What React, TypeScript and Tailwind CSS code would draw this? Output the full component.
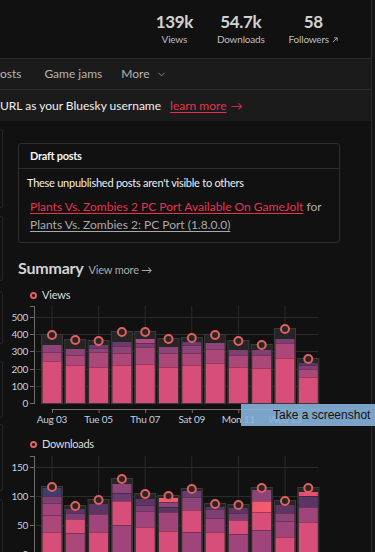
import { ChevronDown } from "lucide-react"

type Seg = [number, string]
type Bar = { top: number; segs: Seg[] }

const PINK = "#d84e7a"
const MAUVE = "#ab4779"
const MAUVE2 = "#a0457c"
const PURPLE = "#8d4579"
const PURPLE2 = "#7d4075"
const DARK = "#6b3a6e"
const DARK2 = "#5c3565"
const NAVY = "#433b69"
const RED = "#f25a6e"

const viewBars: Bar[] = [
  { top: 334, segs: [[345, PURPLE], [352, MAUVE], [361, PINK]] },
  { top: 339, segs: [[349, PURPLE], [355, MAUVE], [365, PINK]] },
  { top: 340, segs: [[345, DARK], [348, PURPLE], [352, MAUVE], [367, PINK]] },
  { top: 331, segs: [[342, DARK], [346, PURPLE], [353, MAUVE], [365, PINK]] },
  { top: 331, segs: [[339, "#b24a80"], [343, PURPLE2], [347, MAUVE], [364, PINK]] },
  { top: 338, segs: [[347, PURPLE], [353, MAUVE], [367, PINK]] },
  { top: 337, segs: [[342, DARK], [345, PURPLE], [353, MAUVE], [365, PINK]] },
  { top: 334, segs: [[343, PURPLE], [349, MAUVE], [363, PINK]] },
  { top: 340, segs: [[350, PURPLE2], [355, MAUVE], [367, PINK]] },
  { top: 344, segs: [[350, PURPLE2], [355, MAUVE], [368, PINK]] },
  { top: 328, segs: [[339, PURPLE2], [343, MAUVE], [358, PINK]] },
  { top: 358, segs: [[363, DARK2], [365, PURPLE2], [369, MAUVE], [377, PINK]] },
]

const dlBars: Bar[] = [
  { top: 486, segs: [[488, NAVY], [496, PURPLE2], [503, MAUVE2], [515, MAUVE], [532, PINK]] },
  { top: 505, segs: [[509, DARK2], [513, PURPLE2], [519, PINK], [533, MAUVE]] },
  { top: 499, segs: [[504, DARK2], [514, MAUVE2], [532, PINK]] },
  { top: 478, segs: [[484, PURPLE], [493, DARK], [501, PINK], [525, MAUVE2]] },
  { top: 493, segs: [[499, DARK2], [505, PURPLE2], [511, MAUVE2], [527, PINK]] },
  { top: 495, segs: [[498, RED], [502, PURPLE], [507, DARK2], [512, MAUVE2], [531, PINK]] },
  { top: 488, segs: [[491, DARK], [497, PURPLE], [510, PINK], [532, MAUVE2]] },
  { top: 503, segs: [[507, DARK2], [509, PURPLE2], [518, MAUVE2], [532, PINK]] },
  { top: 504, segs: [[508, DARK2], [513, PURPLE2], [520, PINK], [534, MAUVE2]] },
  { top: 487, segs: [[490, PURPLE], [501, RED], [512, PINK], [530, MAUVE2]] },
  { top: 500, segs: [[505, DARK2], [513, PURPLE], [521, MAUVE2], [537, PINK]] },
  { top: 487, segs: [[492, "#e84e72"], [496, DARK2], [507, MAUVE2], [522, PINK]] },
]

const xLabels = ["Aug 03", "Tue 05", "Thu 07", "Sat 09", "Mon 11", "Wed 13"]

function Chart({
  top,
  height,
  bars,
  bottom,
  axisTop,
  ticks,
  showX,
}: {
  top: number
  height: number
  bars: Bar[]
  bottom: number
  axisTop: number
  ticks: [string, number][]
  showX?: boolean
}) {
  const barX = (i: number) => 41 + i * 23.3
  return (
    <svg width={368} height={height} viewBox={`3 ${top} 368 ${height}`} className="block shrink-0" fontFamily="Lato, sans-serif">
      {/* grid */}
      {ticks.slice(0, -1).map(([l, y]) => (
        <line key={l} x1={36} x2={318} y1={y + 0.5} y2={y + 0.5} stroke="#2b2b2b" />
      ))}
      {[0, 2, 4, 6, 8, 10].map((i) => (
        <line key={i} x1={barX(i) + 11} x2={barX(i) + 11} y1={axisTop} y2={bottom} stroke="#2b2b2b" />
      ))}
      {/* y axis */}
      <line x1={34.5} x2={34.5} y1={axisTop} y2={Math.min(bottom, top + height)} stroke="#6e6e6e" />
      <line x1={30} x2={35} y1={axisTop + 0.5} y2={axisTop + 0.5} stroke="#6e6e6e" />
      {ticks.map(([l, y]) => (
        <g key={l}>
          <line x1={30} x2={35} y1={y + 0.5} y2={y + 0.5} stroke="#6e6e6e" />
          <text x={28} y={y + 4} textAnchor="end" fontSize={10} letterSpacing={-0.3} fill="#c6d0df">
            {l}
          </text>
        </g>
      ))}
      {/* bars */}
      {bars.map((b, i) => {
        const x = barX(i)
        return (
          <g key={i}>
            <rect x={x + 0.5} y={b.top + 0.5} width={21} height={bottom - b.top} fill="#252525" stroke="#3a3a3a" />
            {b.segs.map(([y, c], j) => {
              const end = j + 1 < b.segs.length ? b.segs[j + 1][0] : bottom
              return <rect key={j} x={x + 1.5} y={y} width={19} height={end - y} fill={c} />
            })}
            {b.segs.slice(1).map(([y], j) => (
              <line key={j} x1={x + 1.5} x2={x + 20.5} y1={y + 0.5} y2={y + 0.5} stroke="rgba(0,0,0,0.28)" />
            ))}
          </g>
        )
      })}
      {bars.map((b, i) => (
        <circle key={i} cx={barX(i) + 11} cy={b.top + 1} r={4} fill="#262626" stroke="#e2605f" strokeWidth={2} />
      ))}
      {showX && (
        <g>
          <line x1={51.5} x2={320} y1={409.5} y2={409.5} stroke="#6e6e6e" />
          {xLabels.map((l, k) => {
            const cx = barX(k * 2) + 11
            return (
              <g key={l}>
                <line x1={cx + 0.5} x2={cx + 0.5} y1={409} y2={413} stroke="#6e6e6e" />
                <text x={cx} y={423} textAnchor="middle" fontSize={10} letterSpacing={-0.2} fill="#c6d0df">
                  {l}
                </text>
              </g>
            )
          })}
        </g>
      )}
    </svg>
  )
}

function Stat({ value, label, arrow }: { value: string; label: string; arrow?: boolean }) {
  return (
    <div className="flex flex-col items-center">
      <span className="text-[17px] leading-[22px] font-bold tracking-[-0.4px] text-[#d2d2d2]">{value}</span>
      <span className="text-[10px] leading-[13px] tracking-[-0.2px] text-[#bdbdbd] flex items-center gap-[3px]">
        {label}
        {arrow && (
          <svg width="6" height="6" viewBox="0 0 7 7" fill="none" stroke="#bdbdbd" strokeWidth="1">
            <path d="M1 6L6 1M2.5 1H6V4.5" />
          </svg>
        )}
      </span>
    </div>
  )
}

export default function App() {
  return (
    <div className="w-[375px] h-[552px] overflow-hidden bg-[#111111] flex relative" style={{ fontFamily: "Lato, 'Noto Sans', sans-serif" }}>
      <div className="w-[371px] shrink-0 flex flex-col">
        {/* header */}
        <div className="h-[59px] shrink-0 border-b border-[#2a2a2a] flex justify-end items-start pt-[11px] pr-[33px] gap-[24px]">
          <Stat value="139k" label="Views" />
          <Stat value="54.7k" label="Downloads" />
          <Stat value="58" label="Followers" arrow />
        </div>
        {/* nav */}
        <div className="h-[31px] shrink-0 bg-[#1b1b1b] border-b border-[#2c2c2c] flex items-center text-[12px] text-[#b4b4b4]">
          <span className="ml-[-7px]">Posts</span>
          <span className="ml-[23px]">Game jams</span>
          <span className="ml-[19px] flex items-center gap-[6px]">
            More <ChevronDown size={11} strokeWidth={1.5} />
          </span>
        </div>
        {/* banner */}
        <div className="h-[31px] shrink-0 bg-[#1b1b1b] flex items-center text-[12px]">
          <span className="text-[#f0f0f0]">URL as your Bluesky username</span>
          <span className="ml-[9px] text-[#e8304f] underline underline-offset-2">learn more</span>
          <span className="ml-[4px] text-[#e8304f]">→</span>
        </div>
        {/* content */}
        <div className="flex flex-1 min-h-0">
          <div className="w-[3px] shrink-0 flex flex-col">
            <div className="mt-[8px] h-[79px] shrink-0 border-r border-y border-[#262626] rounded-r-[3px]" />
            <div className="mt-[8px] h-[65px] shrink-0 border-r border-y border-[#262626] rounded-r-[3px]" />
            <div className="mt-[10px] h-[53px] shrink-0 border-r border-y border-[#262626] rounded-r-[3px]" />
            <div className="mt-[17px] h-[57px] shrink-0 border-r border-y border-[#262626] rounded-r-[3px]" />
            <div className="mt-[6px] h-[67px] shrink-0 border-r border-y border-[#262626] rounded-r-[3px]" />
            <div className="mt-[8px] h-[80px] shrink-0 border-r border-y border-[#262626] rounded-r-[3px]" />
          </div>
          <div className="flex-1 flex flex-col">
            <div className="mt-[22px] ml-[15px] w-[322px] h-[100px] shrink-0 border border-[#2e2e2e] rounded-[3px]">
              <div className="h-[25px] border-b border-[#2e2e2e] flex items-center px-[11px] text-[11px] font-bold tracking-[-0.3px] text-[#f4f4f4]">
                Draft posts
              </div>
              <div className="pl-[8px] pt-[6px]">
                <p className="text-[11px] leading-[16px] tracking-[-0.25px] text-[#f0f0f0]">These unpublished posts aren't visible to others</p>
                <p className="mt-[7px] pl-[3px] text-[12px] leading-[18px] text-[#a9a9a9]">
                  <span className="text-[#e8304f] underline underline-offset-2">Plants Vs. Zombies 2 PC Port Available On GameJolt</span> for{" "}
                  <span className="underline underline-offset-2">Plants Vs. Zombies 2: PC Port (1.8.0.0)</span>
                </p>
              </div>
            </div>
            <div className="mt-[13px] ml-[15px] h-[20px] shrink-0 flex items-baseline gap-[5px]">
              <span className="text-[16px] font-bold tracking-[-0.2px] text-[#d4d4d4]">Summary</span>
              <span className="text-[11px] tracking-[-0.2px] text-[#a8a8a8]">View more →</span>
            </div>
            <div className="mt-[11px] ml-[27px] h-[16px] shrink-0 flex items-center gap-[5px] text-[11px] tracking-[-0.2px] text-[#dcdcdc]">
              <span className="w-[7px] h-[7px] rounded-full border-2 border-[#e2605f]" />
              Views
            </div>
            <Chart
              top={303}
              height={125}
              bars={viewBars}
              bottom={403}
              axisTop={306}
              showX
              ticks={[
                ["500", 317],
                ["400", 334],
                ["300", 351],
                ["200", 369],
                ["100", 386],
                ["0", 403],
              ]}
            />
            <div className="mt-[8px] ml-[27px] h-[16px] shrink-0 flex items-center gap-[5px] text-[11px] tracking-[-0.3px] text-[#dcdcdc]">
              <span className="w-[7px] h-[7px] rounded-full border-2 border-[#e2605f]" />
              Downloads
            </div>
            <Chart
              top={452}
              height={108}
              bars={dlBars}
              bottom={560}
              axisTop={456}
              ticks={[
                ["150", 467],
                ["100", 496],
                ["50", 525],
                ["0", 554],
              ]}
            />
          </div>
        </div>
      </div>
      <div className="w-[1px] shrink-0 bg-[#292929]" />
      <div className="flex-1 bg-[#151515]" />
      {/* tooltip */}
      <div
        className="absolute left-[241px] top-[404px] w-[134px] h-[22px] bg-[#87b4dc]/90 flex items-center pl-[32px] text-[12px] whitespace-nowrap text-[#111]"
        style={{ fontFamily: "'Liberation Sans', sans-serif" }}
      >
        Take a screenshot
      </div>
    </div>
  )
}
